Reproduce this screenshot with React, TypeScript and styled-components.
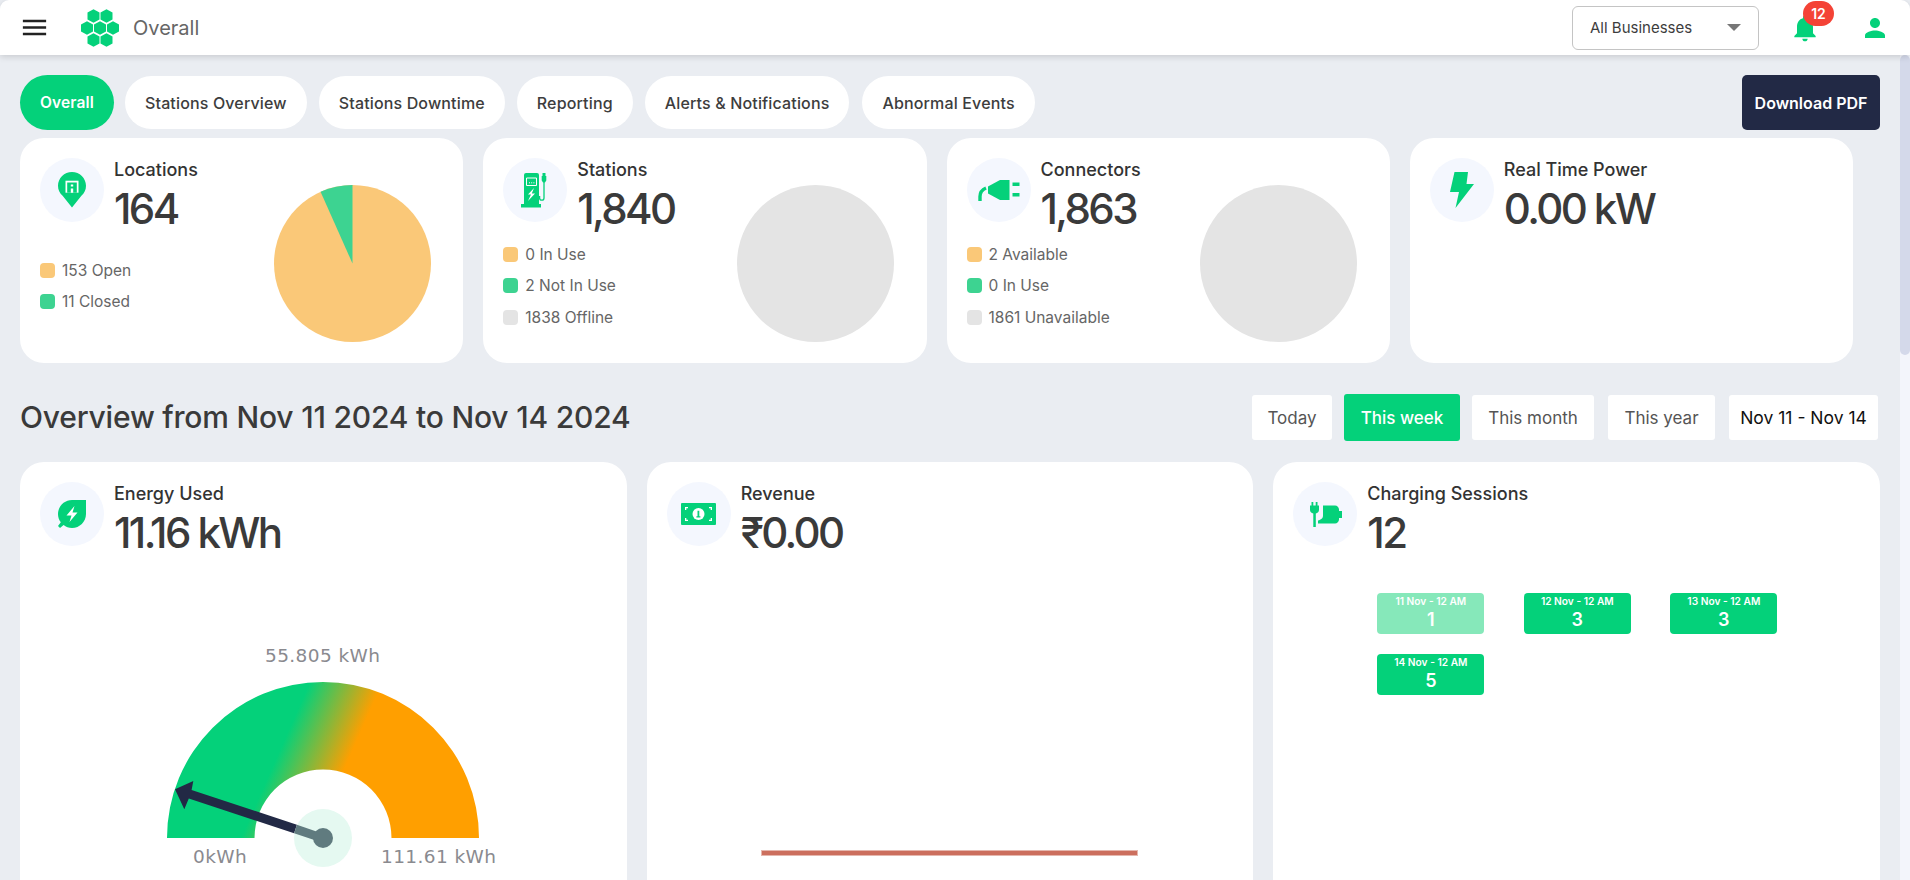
import type { ReactElement, ReactNode } from 'react'
import styled, { createGlobalStyle } from 'styled-components'

const GREEN = '#04d17a'
const NAVY = '#222945'
const ORANGE = '#fac878'
const MINT = '#3dd391'
const GREY = '#e4e4e4'

const GlobalStyle = createGlobalStyle`
  * { box-sizing: border-box; }
  html, body { margin: 0; height: 100%; overflow: hidden; background: #fff; }
  #root { height: 100%; }
  body { font-family: Inter, "Liberation Sans", sans-serif; color: #3a3a3a; }
`

// ----- icons -----

const hexagon = (cx: number, cy: number) =>
  `${cx},${cy - 6.8} ${cx + 6},${cy - 3.4} ${cx + 6},${cy + 3.4} ${cx},${cy + 6.8} ${cx - 6},${cy + 3.4} ${cx - 6},${cy - 3.4}`

const Logo = () => (
  <svg width="40" height="38" viewBox="0 0 40 38">
    {[
      [13.5, 7],
      [26.5, 7],
      [7, 19],
      [20, 19],
      [33, 19],
      [13.5, 31],
      [26.5, 31]
    ].map(([x, y]) => (
      <polygon key={`${x}-${y}`} points={hexagon(x, y)} fill={GREEN} />
    ))}
  </svg>
)

const MenuIcon = () => (
  <svg width="31" height="31" viewBox="0 0 24 24" fill="#222">
    <path d="M3 18h18v-2H3v2zm0-5h18v-2H3v2zm0-7v2h18V6H3z" />
  </svg>
)

const BellIcon = () => (
  <svg width="32" height="32" viewBox="0 0 24 24" fill={GREEN}>
    <path d="M12 22c1.1 0 2-.9 2-2h-4c0 1.1.89 2 2 2zm6-6v-5c0-3.07-1.64-5.64-4.5-6.32V4c0-.83-.67-1.5-1.5-1.5s-1.5.67-1.5 1.5v.68C7.63 5.36 6 7.92 6 11v5l-2 2v1h16v-1l-2-2z" />
  </svg>
)

const UserIcon = () => (
  <svg width="30" height="30" viewBox="0 0 24 24" fill={GREEN}>
    <path d="M12 12c2.21 0 4-1.79 4-4s-1.79-4-4-4-4 1.79-4 4 1.79 4 4 4zm0 2c-2.67 0-8 1.34-8 4v2h16v-2c0-2.66-5.33-4-8-4z" />
  </svg>
)

const PinIcon = () => (
  <svg width="28" height="36" viewBox="0 0 28 36">
    <path d="M14 0C6.3 0 0 6.2 0 13.8c0 4 1.7 7.4 4.6 10L14 35.500l9.400-11.700c2.900-2.600 4.600-6 4.600-10C28 6.200 21.700 0 14 0z" fill={GREEN} />
    <path d="M7.500 8.700h13v12h-13z" fill="#fff" />
    <path d="M9.200 10.500h9.600v10.200H9.200z" fill={GREEN} />
    <path d="M12.800 12.500h2.400v2h-2.400zM12.800 16.500h2.400v4.200h-2.400z" fill="#fff" />
  </svg>
)

const PumpIcon = () => (
  <svg width="28" height="36" viewBox="0 0 28 36">
    <path d="M3 3a2 2 0 0 1 2-2h11a2 2 0 0 1 2 2v29h2v3.500H0V32h3z" fill={GREEN} />
    <path d="M5.500 6h10v7.500h-10z" fill="none" stroke="#fff" strokeWidth="1" />
    <path d="M8 10.800h1M10.200 10.800h1M12.400 10.800h1" stroke="#fff" strokeWidth="1" />
    <path d="M13 16l-6 6.500h3L7 29l7-7.500h-3.200z" fill="#fff" />
    <path d="M23 10v16a2.200 2.200 0 0 1-4.400 0v-2" fill="none" stroke={GREEN} strokeWidth="1.300" />
    <path d="M21.500 1h3v3h.8v4.500L24 10.500h-2l-1.300-2V4h.8z" fill={GREEN} />
  </svg>
)

const PlugIcon = () => (
  <svg width="42" height="24" viewBox="0 0 42 24">
    <path d="M2 23v-4.500C2 14.500 4.500 11.500 8 10" fill="none" stroke={GREEN} strokeWidth="3.400" />
    <path d="M10 8.500L22 2h9.500v20H22L10 15.500z" fill={GREEN} />
    <path d="M34.500 4.500h7V8h-7zM34.500 15h7v3.500h-7z" fill={GREEN} />
  </svg>
)

const BoltIcon = () => (
  <svg width="24" height="36" viewBox="0 0 24 36">
    <path d="M4.500 0h13.500l-1.500 12H24L5.500 36 9 20H0z" fill={GREEN} strokeLinejoin="round" />
  </svg>
)

const LeafIcon = () => (
  <svg width="28" height="28" viewBox="0 0 28 28">
    <path d="M28 0v14c0 7.700-6.300 14-14 14-3.200 0-6.100-1.100-8.400-2.900L2 28 0 26l2.800-3.700C1 20 0 17.100 0 14 0 6.300 6.300 0 14 0z" fill={GREEN} />
    <path d="M16.500 6L8.500 15.500h5L11.500 22l8-9.500h-5z" fill="#fff" />
  </svg>
)

const MoneyIcon = () => (
  <svg width="35" height="22" viewBox="0 0 35 22">
    <rect width="35" height="22" rx="1" fill={GREEN} />
    <circle cx="17.500" cy="11" r="6" fill="#fff" />
    <path d="M16.500 7.800h1.800v6.400h-1.800zM15.400 13.300h4v1.300h-4z" fill={GREEN} />
    <path d="M4 4h3v1.300H5.300V7H4zM31 4h-3v1.300h1.700V7H31zM4 18h3v-1.300H5.300V15H4zM31 18h-3v-1.300h1.700V15H31z" fill="#fff" />
  </svg>
)

const SessionIcon = () => (
  <svg width="33" height="25" viewBox="0 0 33 25">
    <path d="M2.500 0h1.800v3.500h2.400V0h1.800v3.500h1.500v4.200c0 2-1.400 3.500-3.200 3.800V25H4.300V11.500C2.400 11.200 1 9.700 1 7.700V3.500h1.500z" fill={GREEN} />
    <path d="M14 3.500h12c2.200 0 4 1.800 4 4v1.500h3v7h-3v1.500c0 2.200-1.800 4-4 4H9v-3c3-1 5-1.800 5-5z" fill={GREEN} />
  </svg>
)

const Pie = ({ wedge }: { wedge?: number }) => {
  const r = 78.5
  let slice = null
  if (wedge) {
    const a = (wedge / 360) * 2 * Math.PI
    const x = 78.5 - r * Math.sin(a)
    const y = 78.5 - r * Math.cos(a)
    slice = <path d={`M78.5 78.5L78.5 0A${r} ${r} 0 0 0 ${x} ${y}z`} fill={MINT} />
  }
  return (
    <svg width="157" height="157" viewBox="0 0 157 157">
      <circle cx="78.5" cy="78.5" r={r} fill={wedge ? ORANGE : GREY} />
      {slice}
    </svg>
  )
}

const Gauge = () => (
  <svg width="400" height="240" viewBox="0 0 400 240">
    <defs>
      <linearGradient id="gaugeFill" gradientUnits="userSpaceOnUse" x1="170" y1="41" x2="231" y2="68">
        <stop offset="0" stopColor={GREEN} />
        <stop offset="1" stopColor="#ff9f00" />
      </linearGradient>
    </defs>
    <path d="M27 197a156 156 0 0 1 312 0h-87.500a68.500 68.500 0 0 0-137 0z" fill="url(#gaugeFill)" />
    <circle cx="183" cy="197" r="29" fill="#e5f9f1" />
    <polygon points="35,148.300 53.300,140 51.600,149 156.900,183.700 154.100,192.300 48.800,157.600 44.300,168.300" fill={NAVY} />
    <polygon points="156.900,183.700 183,192.700 181,201.300 154.100,192.300" fill="#607b7f" />
    <circle cx="183" cy="197" r="10" fill="#607b7f" />
  </svg>
)

// ----- page -----

const Page = styled.div`
  display: flex;
  flex-direction: column;
  height: 880px;
  overflow: hidden;
  background: #eaedf2;
`

const Header = styled.header`
  position: relative;
  z-index: 2;
  flex: none;
  display: flex;
  align-items: center;
  height: 55px;
  padding: 0 20px 0 19px;
  background: #fff;
  border-radius: 9px 9px 0 0;
  box-shadow: 0 2px 6px rgba(0, 0, 0, 0.14);
`

const MenuButton = styled.div`
  display: flex;
  margin-right: 30px;
`

const PageName = styled.span`
  margin-left: 13px;
  font-size: 20px;
  color: #666;
`

const HeaderRight = styled.div`
  display: flex;
  align-items: center;
  margin-left: auto;
`

const BusinessSelect = styled.div`
  display: flex;
  align-items: center;
  justify-content: space-between;
  width: 187px;
  height: 44px;
  padding: 0 17px;
  margin-right: 30px;
  font-size: 15px;
  color: #3d3d3d;
  border: 1px solid #c4c4c4;
  border-radius: 6px;

  &::after {
    content: '';
    border-left: 7.5px solid transparent;
    border-right: 7.5px solid transparent;
    border-top: 7.5px solid #777;
  }
`

const BellWrap = styled.div`
  position: relative;
  display: flex;
  margin-right: 39px;
`

const Badge = styled.span`
  position: absolute;
  top: -11px;
  left: 14px;
  width: 31px;
  height: 25px;
  font-size: 14px;
  font-weight: 600;
  line-height: 25px;
  text-align: center;
  color: #fff;
  background: #f44336;
  border-radius: 13px;
`

const Body = styled.div`
  flex: 1;
  display: flex;
  min-height: 0;
`

const Content = styled.main`
  flex: 1;
  min-width: 0;
  padding: 20px 20px 0;
  overflow: hidden;
`

const ScrollTrack = styled.div`
  flex: none;
  width: 10px;
  background: #f3f5fb;
`

const ScrollThumb = styled.div`
  height: 300px;
  background: #d4d9ea;
  border-radius: 5px;
`

const TabRow = styled.div`
  display: flex;
  align-items: center;
  height: 55px;
`

const Tab = styled.div<{ $active?: boolean; $gap: number }>`
  display: flex;
  align-items: center;
  height: ${p => (p.$active ? 55 : 53)}px;
  padding: 0 20px;
  margin-right: ${p => p.$gap}px;
  font-size: ${p => (p.$active ? 15.5 : 16)}px;
  font-weight: ${p => (p.$active ? 600 : 500)};
  letter-spacing: 0.150px;
  color: ${p => (p.$active ? '#fff' : '#3d3d3d')};
  background: ${p => (p.$active ? GREEN : '#fff')};
  border-radius: 28px;
`

const DownloadButton = styled.div`
  display: flex;
  align-items: center;
  justify-content: center;
  width: 138px;
  height: 55px;
  margin-left: auto;
  font-size: 16px;
  font-weight: 600;
  color: #fff;
  background: ${NAVY};
  border-radius: 5px;
`

const StatGrid = styled.div`
  display: grid;
  grid-template-columns: repeat(4, 1fr);
  gap: 20px;
  margin-top: 8px;
  margin-right: 27px;
`

const Card = styled.section`
  position: relative;
  padding: 20px;
  background: #fff;
  border-radius: 24px;
`

const StatCard = styled(Card)`
  display: flex;
  flex-direction: column;
  height: 225px;
`

const CardHead = styled.div`
  display: flex;
  gap: 10px;
`

const IconCircle = styled.div`
  flex: none;
  display: flex;
  align-items: center;
  justify-content: center;
  width: 64px;
  height: 64px;
  background: #f4f7fe;
  border-radius: 50%;
`

const CardTitle = styled.div`
  height: 24px;
  font-size: 18px;
  font-weight: 500;
  line-height: 24px;
  color: #333;
`

const CardValue = styled.div`
  padding-top: 2px;
  font-size: 42px;
  font-weight: 500;
  line-height: 50px;
  letter-spacing: -2.600px;
  color: #3a3a3a;
`

const Legend = styled.ul<{ $top: number }>`
  display: flex;
  flex-direction: column;
  gap: 11.500px;
  padding: 0;
  margin: ${p => p.$top}px 0 0;
  list-style: none;
`

const LegendItem = styled.li`
  display: flex;
  align-items: center;
  gap: 7px;
  height: 20px;
  font-size: 15.500px;
  color: #666;
`

const Swatch = styled.span<{ $color: string }>`
  width: 15px;
  height: 15px;
  background: ${p => p.$color};
  border-radius: 4px;
`

const PieSlot = styled.div`
  position: absolute;
  top: 47px;
  right: 32.500px;
  display: flex;
`

const SectionHead = styled.div`
  display: flex;
  align-items: center;
  justify-content: space-between;
  height: 47px;
  margin: 31px 2px 21px 0;
`

const SectionTitle = styled.h2`
  margin: 0;
  font-size: 30px;
  font-weight: 500;
  line-height: 45px;
  letter-spacing: -0.200px;
  color: #3a3a3a;
`

const RangeButtons = styled.div`
  display: flex;
  align-items: center;
`

const RangeButton = styled.div<{ $active?: boolean; $dark?: boolean; $gap: number; $width: number }>`
  display: flex;
  align-items: center;
  justify-content: center;
  width: ${p => p.$width}px;
  height: ${p => (p.$active ? 47 : 45)}px;
  margin-left: ${p => p.$gap}px;
  font-size: ${p => (p.$dark ? 17.5 : 17)}px;
  color: ${p => (p.$active ? '#fff' : p.$dark ? '#111' : '#555')};
  font-weight: ${p => (p.$active ? 500 : 400)};
  background: ${p => (p.$active ? GREEN : '#fff')};
  border-radius: 3px;
`

const ChartGrid = styled.div`
  display: grid;
  grid-template-columns: repeat(3, 1fr);
  gap: 20px;
`

const ChartCard = styled(Card)`
  height: 460px;
`

const GaugeSlot = styled.div`
  position: relative;
  margin: 0 -20px;
`

const GaugeDrawing = styled.div`
  position: absolute;
  top: 83px;
  left: 120px;
  display: flex;
`

const GaugeLabel = styled.span<{ $left: number; $top: number }>`
  position: absolute;
  top: ${p => p.$top}px;
  left: ${p => p.$left}px;
  font-family: 'DejaVu Sans', Verdana, sans-serif;
  font-size: 18.500px;
  white-space: nowrap;
  letter-spacing: 0.400px;
  color: #8a8a8f;
`

const RevenueLine = styled.div`
  position: absolute;
  top: 389px;
  left: 115px;
  width: 375px;
  height: 4px;
  background: #cc6f5e;
  box-shadow: 0 0 0 1px rgba(204, 111, 94, 0.5);
`

const TileGrid = styled.div`
  display: grid;
  grid-template-columns: repeat(3, 107px);
  gap: 20px 39.500px;
  margin: 35px 0 0 84px;
`

const Tile = styled.div<{ $faded?: boolean }>`
  display: flex;
  flex-direction: column;
  align-items: center;
  height: 41px;
  padding-top: 2px;
  color: #fff;
  background: ${p => (p.$faded ? '#86e8ba' : GREEN)};
  border-radius: 4px;
`

const TileLabel = styled.span`
  font-size: 10.200px;
  font-weight: 600;
  line-height: 13px;
`

const TileValue = styled.span`
  font-size: 18px;
  font-weight: 600;
  line-height: 23px;
`

// ----- data -----

const TABS = [
  { label: 'Overall', active: true, gap: 11 },
  { label: 'Stations Overview', gap: 12 },
  { label: 'Stations Downtime', gap: 12 },
  { label: 'Reporting', gap: 12 },
  { label: 'Alerts & Notifications', gap: 13 },
  { label: 'Abnormal Events', gap: 0 }
]

type StatType = {
  title: string
  value: string
  icon: ReactNode
  legendTop?: number
  legend?: [string, string][]
  wedge?: number
  pie?: boolean
}

const STATS: StatType[] = [
  {
    title: 'Locations',
    value: '164',
    icon: <PinIcon />,
    legendTop: 26,
    legend: [
      [ORANGE, '153 Open'],
      [MINT, '11 Closed']
    ],
    pie: true,
    wedge: 24
  },
  {
    title: 'Stations',
    value: '1,840',
    icon: <PumpIcon />,
    legendTop: 10,
    legend: [
      [ORANGE, '0 In Use'],
      [MINT, '2 Not In Use'],
      [GREY, '1838 Offline']
    ],
    pie: true
  },
  {
    title: 'Connectors',
    value: '1,863',
    icon: <PlugIcon />,
    legendTop: 10,
    legend: [
      [ORANGE, '2 Available'],
      [MINT, '0 In Use'],
      [GREY, '1861 Unavailable']
    ],
    pie: true
  },
  { title: 'Real Time Power', value: '0.00 kW', icon: <BoltIcon /> }
]

const RANGES = [
  { label: 'Today', gap: 0, width: 80 },
  { label: 'This week', active: true, gap: 12, width: 116 },
  { label: 'This month', gap: 12, width: 122 },
  { label: 'This year', gap: 14, width: 107 },
  { label: 'Nov 11 - Nov 14', dark: true, gap: 14, width: 149 }
]

const TILES = [
  { label: '11 Nov - 12 AM', value: 1, faded: true },
  { label: '12 Nov - 12 AM', value: 3 },
  { label: '13 Nov - 12 AM', value: 3 },
  { label: '14 Nov - 12 AM', value: 5 }
]

const Head = ({ icon, title, value }: { icon: ReactNode; title: string; value: string }) => (
  <CardHead>
    <IconCircle>{icon}</IconCircle>
    <div>
      <CardTitle>{title}</CardTitle>
      <CardValue>{value}</CardValue>
    </div>
  </CardHead>
)

const App = (): ReactElement => (
  <>
    <GlobalStyle />
    <Page>
      <Header>
        <MenuButton>
          <MenuIcon />
        </MenuButton>
        <Logo />
        <PageName>Overall</PageName>
        <HeaderRight>
          <BusinessSelect>All Businesses</BusinessSelect>
          <BellWrap>
            <BellIcon />
            <Badge>12</Badge>
          </BellWrap>
          <UserIcon />
        </HeaderRight>
      </Header>
      <Body>
        <Content>
          <TabRow>
            {TABS.map(tab => (
              <Tab key={tab.label} $active={tab.active} $gap={tab.gap}>
                {tab.label}
              </Tab>
            ))}
            <DownloadButton>Download PDF</DownloadButton>
          </TabRow>

          <StatGrid>
            {STATS.map(stat => (
              <StatCard key={stat.title}>
                <Head icon={stat.icon} title={stat.title} value={stat.value} />
                {stat.legend && (
                  <Legend $top={stat.legendTop ?? 0}>
                    {stat.legend.map(([color, text]) => (
                      <LegendItem key={text}>
                        <Swatch $color={color} />
                        {text}
                      </LegendItem>
                    ))}
                  </Legend>
                )}
                {stat.pie && (
                  <PieSlot>
                    <Pie wedge={stat.wedge} />
                  </PieSlot>
                )}
              </StatCard>
            ))}
          </StatGrid>

          <SectionHead>
            <SectionTitle>Overview from Nov 11 2024 to Nov 14 2024</SectionTitle>
            <RangeButtons>
              {RANGES.map(range => (
                <RangeButton
                  key={range.label}
                  $active={range.active}
                  $dark={range.dark}
                  $gap={range.gap}
                  $width={range.width}>
                  {range.label}
                </RangeButton>
              ))}
            </RangeButtons>
          </SectionHead>

          <ChartGrid>
            <ChartCard>
              <Head icon={<LeafIcon />} title="Energy Used" value="11.16 kWh" />
              <GaugeSlot>
                <GaugeDrawing>
                  <Gauge />
                </GaugeDrawing>
                <GaugeLabel $left={245} $top={87}>55.805 kWh</GaugeLabel>
                <GaugeLabel $left={173} $top={288}>0kWh</GaugeLabel>
                <GaugeLabel $left={361} $top={288}>111.61 kWh</GaugeLabel>
              </GaugeSlot>
            </ChartCard>
            <ChartCard>
              <Head icon={<MoneyIcon />} title="Revenue" value="₹0.00" />
              <RevenueLine />
            </ChartCard>
            <ChartCard>
              <Head icon={<SessionIcon />} title="Charging Sessions" value="12" />
              <TileGrid>
                {TILES.map(tile => (
                  <Tile key={tile.label} $faded={tile.faded}>
                    <TileLabel>{tile.label}</TileLabel>
                    <TileValue>{tile.value}</TileValue>
                  </Tile>
                ))}
              </TileGrid>
            </ChartCard>
          </ChartGrid>
        </Content>
        <ScrollTrack>
          <ScrollThumb />
        </ScrollTrack>
      </Body>
    </Page>
  </>
)

export default App
